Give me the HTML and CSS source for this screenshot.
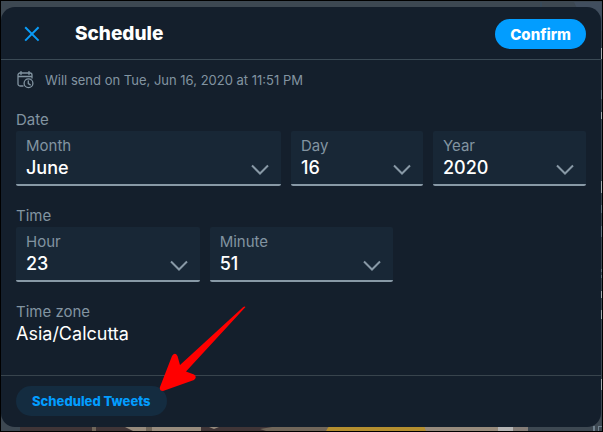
FILE: index.html
```html
<!DOCTYPE html>
<html lang="en">
<head>
<meta charset="utf-8">
<meta name="viewport" content="width=device-width, initial-scale=1">
<title>Schedule</title>
<link rel="stylesheet" href="styles.css">
</head>
<body>
<div class="page">
  <svg class="backdrop-top" width="80" height="30" viewBox="0 0 80 30" aria-hidden="true">
    <path d="M19 1v6" stroke="#354d63"/>
    <path d="M52 1h28v29h-4Q58 18 52 1z" fill="#414e5e"/>
  </svg>
  <svg class="backdrop-side" width="1" height="424" viewBox="0 0 1 424" aria-hidden="true">
    <path fill="#a5abb0" d="M0 47h1v11H0zM0 111h1v7H0zM0 180h1v12H0zM0 290h1v7H0zM0 309h1v9H0zM0 378h1v11H0z"/>
    <path fill="#647480" d="M0 89h1v9H0zM0 204h1v8H0zM0 225h1v11H0zM0 268h1v3H0zM0 274h1v3H0z"/>
  </svg>
  <svg class="backdrop-photo" viewBox="0 0 601 5" preserveAspectRatio="none" aria-hidden="true">
    <path fill="#403537" d="M19 0h265v5H19z"/>
    <path fill="#70665a" d="M91 0h4v5h-4zM145 0h6v5h-6zM277 0h50v5h-62l-6-2z"/>
    <path fill="#978b7d" d="M122 0h23v5h-13zM151 0h49v5h-49zM423 0h74v5h-74zM208 1h10l-5 2z"/>
    <path fill="#b48f30" d="M328 0h95l2 5H325z"/>
    <path fill="#b4b4b4" d="M497 0h15v5h-15z"/>
    <path fill="#847d78" d="M512 0h15v5h-15z"/>
    <path fill="#70818e" d="M592 0h2v5h-2zM597 0h4v1h-3v4h-1z"/>
  </svg>
  <form class="dialog" aria-labelledby="title">
    <header class="header">
      <button class="close" type="button" aria-label="Close">
        <svg width="16" height="16" viewBox="0 0 16 16" aria-hidden="true"><path d="M1.2 1.2l13.4 13.4M14.6 1.2L1.2 14.6"/></svg>
      </button>
      <h1 class="title" id="title">Schedule</h1>
      <button class="confirm" type="button">Confirm</button>
    </header>
    <main class="content">
      <p class="status">
        <svg class="calendar" width="17" height="18" viewBox="0 0 17 18" aria-hidden="true">
          <path d="M6 15H3a2 2 0 0 1-2-2V4a2 2 0 0 1 2-2h10a2 2 0 0 1 2 2v3M1 5.5h14M4 .5v3M12 .5v3"/>
          <circle cx="11.5" cy="12.3" r="4.4"/>
          <path d="M11.3 9.8v2.8l2 1.3"/>
        </svg>
        Will send on Tue, Jun 16, 2020 at 11:51 PM
      </p>
      <fieldset class="group">
        <legend>Date</legend>
        <div class="fields date-fields">
          <div class="field">
            <label for="month">Month</label>
            <select id="month"><option>June</option></select>
            <svg class="chevron" width="18" height="12" viewBox="0 0 18 12" aria-hidden="true"><path d="M1 1.500l8 8 8-8"/></svg>
          </div>
          <div class="field">
            <label for="day">Day</label>
            <select id="day"><option>16</option></select>
            <svg class="chevron" width="18" height="12" viewBox="0 0 18 12" aria-hidden="true"><path d="M1 1.500l8 8 8-8"/></svg>
          </div>
          <div class="field">
            <label for="year">Year</label>
            <select id="year"><option>2020</option></select>
            <svg class="chevron" width="18" height="12" viewBox="0 0 18 12" aria-hidden="true"><path d="M1 1.500l8 8 8-8"/></svg>
          </div>
        </div>
      </fieldset>
      <fieldset class="group">
        <legend>Time</legend>
        <div class="fields time-fields">
          <div class="field">
            <label for="hour">Hour</label>
            <select id="hour"><option>23</option></select>
            <svg class="chevron" width="18" height="12" viewBox="0 0 18 12" aria-hidden="true"><path d="M1 1.500l8 8 8-8"/></svg>
          </div>
          <div class="field">
            <label for="minute">Minute</label>
            <select id="minute"><option>51</option></select>
            <svg class="chevron" width="18" height="12" viewBox="0 0 18 12" aria-hidden="true"><path d="M1 1.500l8 8 8-8"/></svg>
          </div>
        </div>
      </fieldset>
      <div class="zone">
        <div class="zone-label">Time zone</div>
        <div class="zone-value">Asia/Calcutta</div>
      </div>
    </main>
    <footer class="footer">
      <button class="scheduled" type="button">Scheduled Tweets</button>
      <svg class="pointer" width="88" height="88" viewBox="0 0 88 88" aria-hidden="true">
        <path d="M86.500 2Q85.500 1 84 2.300L21 60 18.500 51Q16 46.500 13 51L.8 82.500Q.5 86 4 86L35 75Q38.500 72 35 69.500L27 66.500z"/>
      </svg>
    </footer>
  </form>
</div>
</body>
</html>
```

FILE: styles.css
```css
* {
  box-sizing: border-box;
}

body {
  margin: 0;
  background: #3d4852;
  color: #fff;
  font-family: Inter, "Liberation Sans", sans-serif;
}

button,
select {
  border: 0;
  font-family: inherit;
  cursor: pointer;
}

.page {
  position: relative;
  min-height: 100vh;
  padding: 6px 0 4px;
  border: 1px solid #000;
}

.backdrop-top {
  position: absolute;
  top: 0;
  right: 0;
}

.backdrop-side {
  position: absolute;
  top: 0;
  right: 0;
}

.backdrop-photo {
  position: absolute;
  bottom: 0;
  left: 0;
  width: 100%;
  height: 5px;
}

.dialog {
  position: relative;
  margin-right: 1px;
  border-radius: 14px;
  background: #141f2c;
}

.header {
  display: flex;
  align-items: center;
  height: 53px;
  padding: 2px 15px 0;
  border-bottom: 1px solid #3b4a55;
}

.close {
  display: flex;
  align-items: center;
  justify-content: center;
  width: 32px;
  height: 32px;
  padding: 0;
  background: none;
}

.close svg {
  fill: none;
  stroke: #0a9cf8;
  stroke-width: 2;
}

.title {
  flex: 1;
  margin: 0 0 0 27px;
  font-size: 19px;
  font-weight: 800;
  line-height: 24px;
}

.confirm {
  height: 30px;
  padding: 0 15px;
  border-radius: 15px;
  background: #029dff;
  color: #fff;
  font-size: 15px;
  font-weight: 800;
}

.content {
  padding: 10px 15px 29px;
}

.status {
  display: flex;
  align-items: center;
  gap: 11px;
  margin: 0 0 20px;
  color: #8294a1;
  font-size: 13px;
  line-height: 20px;
}

.calendar {
  margin-left: 1px;
  fill: none;
  stroke: #8294a1;
  stroke-width: 1.3;
  stroke-linecap: round;
}

.group {
  min-width: 0;
  margin: 0 0 20px;
  padding: 0;
  border: 0;
}

legend,
.zone-label {
  padding: 0;
  color: #8294a1;
  font-size: 15px;
  line-height: 20px;
}

.fields {
  display: grid;
  gap: 10px;
  padding-top: 1px;
}

.date-fields {
  grid-template-columns: 265fr 132fr 153fr;
}

.time-fields {
  grid-template-columns: 1fr 1fr;
  width: 66.2%;
}

.field {
  position: relative;
  display: grid;
  height: 55px;
  border-bottom: 2px solid #8899a6;
  border-radius: 2px;
  background: #182736;
}

.field label {
  grid-area: 1 / 1;
  padding: 5px 10px 0;
  color: #8294a1;
  font-size: 15px;
  line-height: 20px;
}

.field select {
  grid-area: 1 / 1;
  width: 100%;
  padding: 20px 10px 0;
  background: none;
  color: #fff;
  font-size: 18px;
  font-weight: 500;
  appearance: none;
}

.chevron {
  position: absolute;
  right: 12px;
  bottom: 8px;
  fill: none;
  stroke: #8899a6;
  stroke-width: 2;
  pointer-events: none;
}

.zone-value {
  font-size: 18px;
  line-height: 24px;
}

.footer {
  position: relative;
  padding: 10px 15px 11px;
  border-top: 1px solid #38444d;
}

.scheduled {
  height: 30px;
  padding: 0 16px;
  border-radius: 15px;
  background: #142c40;
  color: #029dff;
  font-size: 13px;
  font-weight: 800;
}

.pointer {
  position: absolute;
  bottom: 34px;
  left: 158px;
  fill: #f00;
  pointer-events: none;
}
```
